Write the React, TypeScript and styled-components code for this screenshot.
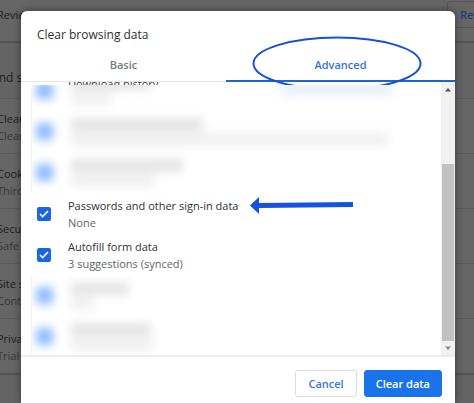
import React from 'react';
import styled, { createGlobalStyle } from 'styled-components';

const GlobalStyle = createGlobalStyle`
  *, *::before, *::after { box-sizing: border-box; }
  html, body, #root { height: 100%; }
  body {
    margin: 0;
    overflow: hidden;
    background: #646464;
    font-family: "Open Sans", "Noto Sans", sans-serif;
    font-size: 11px;
    line-height: 17px;
  }
  button, input { font-family: inherit; margin: 0; }
`;

const Stage = styled.div`
  position: relative;
  height: 100vh;
  overflow: hidden;
`;

const Settings = styled.main`
  margin-left: -3px;
  color: #1c1d1f;
`;

const Card = styled.section`
  background: #666;
  border-bottom: 2px solid #525252;
`;

const SafetyRow = styled.div`
  display: flex;
  justify-content: space-between;
  align-items: flex-start;
  height: 41px;
  padding-top: 1px;
  white-space: nowrap;

  & > span { padding-top: 5px; }
`;

const ReviewButton = styled.button`
  height: 27px;
  width: 72px;
  margin-right: -45px;
  padding: 0 12px;
  border: 1px solid #575757;
  border-radius: 3px;
  background: none;
  color: #1b3f80;
  font-size: 11px;
  font-weight: 600;
  text-align: left;
`;

const SectionTitle = styled.h2`
  height: 55px;
  margin: 0 0 0 -5px;
  padding-top: 26px;
  font-size: 12px;
  font-weight: 500;
  white-space: nowrap;
`;

const SettingRow = styled.div`
  height: 55px;
  padding-top: 11px;
  border-top: 1px solid #5a5a5a;
  white-space: nowrap;
`;

const SettingNote = styled.div`
  color: #35373a;
`;

const Overlay = styled.div`
  position: absolute;
  inset: 0;
  display: flex;
  padding: 11px 19px 0 21px;
`;

const Dialog = styled.section`
  position: relative;
  flex: 1;
  min-width: 0;
  display: flex;
  flex-direction: column;
  background: #fff;
  border-radius: 6px 6px 0 0;
  box-shadow: 0 0 8px rgba(0, 0, 0, 0.45);
`;

const Title = styled.h1`
  margin: 0;
  padding: 13px 16px 0;
  color: #303134;
  font-size: 12px;
  font-weight: 400;
  line-height: 21px;
`;

const Tabs = styled.div`
  display: flex;
  height: 37px;
  border-bottom: 1px solid #e4e6e8;
`;

const Tab = styled.button<{ $active?: boolean }>`
  flex: ${(p) => (p.$active ? '229 1 0' : '205 1 0')};
  height: 37px;
  padding: 3px 0 0;
  border: 0;
  border-bottom: 2px solid ${(p) => (p.$active ? '#1a66d9' : 'transparent')};
  background: none;
  color: ${(p) => (p.$active ? '#3a72d4' : '#76797d')};
  font-size: 11px;
  font-weight: 600;
`;

const Scroller = styled.div`
  display: flex;
  border-bottom: 2px solid #ececed;
`;

const Content = styled.div`
  flex: 1;
  min-width: 0;
  height: 273px;
  overflow: hidden;
  padding-left: 10px;
`;

const ClippedLine = styled.div`
  display: flex;
  align-items: center;
  height: 3px;
  padding-left: 37px;
  overflow: hidden;
  background: #fff;
  color: #3c4043;
`;

const Redacted = styled.div<{ $height: number; $end?: boolean }>`
  display: flex;
  flex-direction: column;
  justify-content: ${(p) => (p.$end ? 'flex-end' : 'flex-start')};
  height: ${(p) => p.$height}px;
  overflow: hidden;
  border-left: 1px solid #eff2f8;
`;

const RedactedRow = styled.div`
  flex: none;
  display: flex;
  align-items: center;
  gap: 18px;
  height: 41px;
  padding-left: 4px;
  filter: blur(5px);
`;

const RedactedBox = styled.div`
  flex: none;
  width: 17px;
  height: 17px;
  border-radius: 2px;
  background: #8fbafc;
`;

const RedactedText = styled.div`
  flex: 1;
  display: flex;
  flex-direction: column;
  gap: 2px;
`;

const RedactedBar = styled.div<{ $width: string; $soft?: boolean }>`
  width: ${(p) => p.$width};
  height: 13px;
  background: ${(p) => (p.$soft ? '#f0f0f1' : '#e4e4e5')};
`;

const OptionRow = styled.label`
  display: flex;
  align-items: center;
  gap: 17px;
  height: 41px;
  padding-left: 6px;
`;

const CheckMark = styled.span`
  display: grid;
  flex: none;
  width: 14px;
  height: 14px;

  & > * { grid-area: 1 / 1; }
  & > svg { pointer-events: none; }
`;

const CheckInput = styled.input`
  appearance: none;
  width: 14px;
  height: 14px;
  border: 2px solid #5f6368;
  border-radius: 2px;

  &:checked { background: #1967e0; border-color: #1967e0; }
`;

const OptionTitle = styled.div`
  color: #303134;
`;

const OptionNote = styled.div`
  color: #5f6368;
`;

const Scrollbar = styled.div`
  display: flex;
  flex-direction: column;
  align-items: center;
  width: 14px;
  background: #f1f1f1;
`;

const ScrollArrow = styled.svg`
  flex: none;
  width: 14px;
  height: 14px;
`;

const Thumb = styled.div`
  width: 12px;
  height: 177px;
  margin-top: auto;
  background: #c1c1c1;
`;

const Footer = styled.footer`
  display: flex;
  justify-content: flex-end;
  gap: 7px;
  padding: 13px 13px 0;
`;

const ActionButton = styled.button<{ $primary?: boolean }>`
  height: 27px;
  padding: 0 ${(p) => (p.$primary ? 11 : 12)}px;
  border: 1px solid ${(p) => (p.$primary ? '#1a73e8' : '#dadce0')};
  border-radius: 3px;
  background: ${(p) => (p.$primary ? '#1a73e8' : '#fff')};
  color: ${(p) => (p.$primary ? '#fff' : '#3a76dc')};
  font-size: 11px;
  font-weight: 600;
  white-space: nowrap;
`;

const Circled = styled.svg`
  position: absolute;
  top: 25px;
  right: 33px;
  width: 170px;
  height: 49px;
  pointer-events: none;
`;

const CircleHaze = styled.div`
  position: absolute;
  top: 74px;
  right: 40px;
  width: 156px;
  height: 18px;
  overflow: hidden;
  pointer-events: none;

  &::before {
    content: "";
    display: block;
    width: 110px;
    height: 7px;
    margin: 0 auto;
    background: #d3dffc;
    filter: blur(6px);
  }
`;

const Pointer = styled.svg`
  position: absolute;
  top: 185px;
  left: 229px;
  width: 104px;
  height: 19px;
  pointer-events: none;
`;

const settings = [
  ['Clear browsing data', 'Clear history, cookies, cache, and more'],
  ['Cookies and other site data', 'Third-party cookies are blocked in Incognito mode'],
  ['Security', 'Safe Browsing and other security settings'],
  ['Site settings', 'Controls what information sites can use and show'],
  ['Privacy Sandbox', 'Trial features are on'],
];

function Option({ title, note }: { title: string; note: string }) {
  return (
    <OptionRow>
      <CheckMark>
        <CheckInput type="checkbox" defaultChecked />
        <svg width="14" height="14" viewBox="0 0 14 14" fill="none" aria-hidden="true">
          <path d="M3 7 5.6 9.6 11 4" stroke="#fff" strokeWidth="1.6" />
        </svg>
      </CheckMark>
      <div>
        <OptionTitle>{title}</OptionTitle>
        <OptionNote>{note}</OptionNote>
      </div>
    </OptionRow>
  );
}

function Hidden({ first, second }: { first: string; second: string }) {
  return (
    <RedactedRow aria-hidden="true">
      <RedactedBox />
      <RedactedText>
        <RedactedBar $width={first} />
        <RedactedBar $width={second} $soft />
      </RedactedText>
    </RedactedRow>
  );
}

export default function App() {
  return (
    <Stage>
      <GlobalStyle />
      <Settings>
        <Card>
          <SafetyRow>
            <span>Review sites that recently sent a lot of notifications</span>
            <ReviewButton>Review</ReviewButton>
          </SafetyRow>
        </Card>
        <SectionTitle>and security</SectionTitle>
        <Card>
          {settings.map(([title, note]) => (
            <SettingRow key={title}>
              <div>{title}</div>
              <SettingNote>{note}</SettingNote>
            </SettingRow>
          ))}
        </Card>
      </Settings>
      <Overlay>
        <Dialog role="dialog" aria-labelledby="dialog-title">
          <Title id="dialog-title">Clear browsing data</Title>
          <Tabs role="tablist">
            <Tab role="tab" aria-selected="false">Basic</Tab>
            <Tab role="tab" aria-selected="true" $active>Advanced</Tab>
          </Tabs>
          <Scroller>
            <Content>
              <ClippedLine>Download history</ClippedLine>
              <Redacted $height={108} $end>
                <Hidden first="80px" second="40px" />
                <Hidden first="132px" second="86%" />
                <Hidden first="112px" second="84px" />
              </Redacted>
              <Option title="Passwords and other sign-in data" note="None" />
              <Option title="Autofill form data" note="3 suggestions (synced)" />
              <Redacted $height={80}>
                <Hidden first="58px" second="22px" />
                <Hidden first="80px" second="82px" />
              </Redacted>
            </Content>
            <Scrollbar aria-hidden="true">
              <ScrollArrow viewBox="0 0 14 14"><path d="M4 9.5 7 6l3 3.5z" fill="#505050" /></ScrollArrow>
              <Thumb />
              <ScrollArrow viewBox="0 0 14 14"><path d="M4 5.5 7 9l3-3.5z" fill="#8a8a8a" /></ScrollArrow>
            </Scrollbar>
          </Scroller>
          <Footer>
            <ActionButton>Cancel</ActionButton>
            <ActionButton $primary>Clear data</ActionButton>
          </Footer>
          <Circled viewBox="0 0 170 49" fill="none" aria-hidden="true">
            <ellipse cx="85" cy="27.5" rx="83.5" ry="26" stroke="#1450d8" strokeWidth="2" />
          </Circled>
          <CircleHaze />
          <Pointer viewBox="0 0 104 19" aria-hidden="true">
            <path d="M0 9.5 9 1v6l94-1v5l-94 1v6z" fill="#1553dc" />
          </Pointer>
        </Dialog>
      </Overlay>
    </Stage>
  );
}
